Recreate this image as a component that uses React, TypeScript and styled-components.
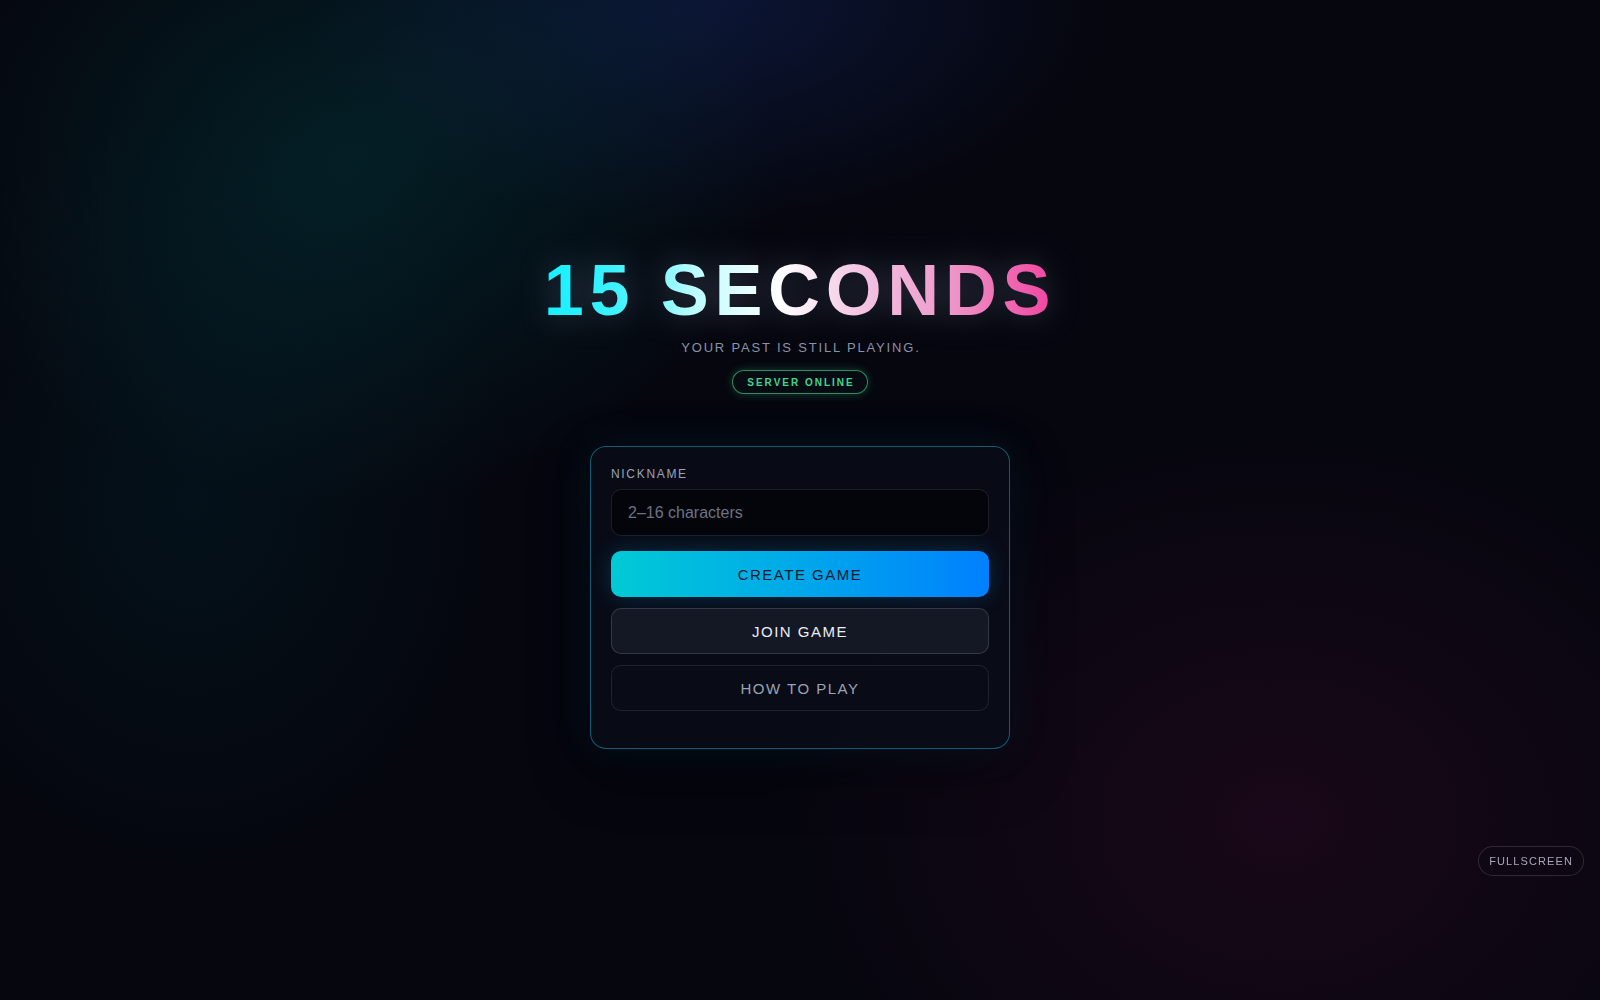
import React, { useState } from "react";
import styled, { createGlobalStyle, css } from "styled-components";

const GlobalStyle = createGlobalStyle`
  * { box-sizing: border-box; }
  html, body { margin: 0; padding: 0; height: 100%; }
  body {
    font-family: "Liberation Sans", Arial, sans-serif;
    background: #05060e;
    color: #e8ecf4;
  }
  #root { min-height: 100vh; }
`;

type Variant = "primary" | "secondary" | "ghost";

export default function App() {
  const [nickname, setNickname] = useState("");

  return (
    <Page>
      <GlobalStyle />
      <Header>
        <Title>15 SECONDS</Title>
        <Tagline>YOUR PAST IS STILL PLAYING.</Tagline>
        <StatusPill>SERVER ONLINE</StatusPill>
      </Header>

      <Card>
        <FieldLabel htmlFor="nickname">NICKNAME</FieldLabel>
        <NicknameInput
          id="nickname"
          placeholder="2–16 characters"
          value={nickname}
          onChange={(event: React.ChangeEvent<HTMLInputElement>) =>
            setNickname(event.target.value)
          }
        />
        <Actions>
          <MenuButton variant="primary">CREATE GAME</MenuButton>
          <MenuButton variant="secondary">JOIN GAME</MenuButton>
          <MenuButton variant="ghost">HOW TO PLAY</MenuButton>
        </Actions>
      </Card>

      <FullscreenButton>FULLSCREEN</FullscreenButton>
    </Page>
  );
}

const Page = styled.main`
  min-height: 100vh;
  display: flex;
  flex-direction: column;
  align-items: center;
  justify-content: center;
  padding-top: 3px;
  background:
    radial-gradient(ellipse 600px 480px at 22% 16%, rgba(0, 88, 92, 0.3), transparent 72%),
    radial-gradient(ellipse 560px 320px at 44% 0%, rgba(22, 46, 116, 0.38), transparent 72%),
    radial-gradient(ellipse 460px 560px at 12% 50%, rgba(0, 62, 72, 0.2), transparent 70%),
    radial-gradient(ellipse 700px 560px at 80% 82%, rgba(72, 12, 50, 0.3), transparent 74%),
    #05060e;
`;

const Header = styled.header`
  display: flex;
  flex-direction: column;
  align-items: center;
`;

const Title = styled.h1`
  margin: 0 0 14px;
  font-size: 72px;
  line-height: 1;
  font-weight: 700;
  letter-spacing: 0.078em;
  background: linear-gradient(
    90deg,
    #14f0ff 0%,
    #3ef2ff 14%,
    #bffcff 30%,
    #ffffff 46%,
    #f2c4e2 62%,
    #ee9ccc 78%,
    #f0439f 100%
  );
  -webkit-background-clip: text;
  background-clip: text;
  -webkit-text-fill-color: transparent;
  color: transparent;
  filter: drop-shadow(0 0 16px rgba(190, 210, 255, 0.26));
`;

const Tagline = styled.p`
  margin: 0 0 15px;
  font-size: 13px;
  line-height: 15px;
  letter-spacing: 0.14em;
  padding-left: 0.14em;
  color: #8a93a8;
`;

const StatusPill = styled.span`
  display: inline-flex;
  align-items: center;
  height: 24px;
  padding: 0 12px 0 14px;
  border-radius: 999px;
  border: 1px solid rgba(64, 214, 146, 0.65);
  background: rgba(6, 24, 20, 0.35);
  box-shadow: 0 0 10px rgba(64, 214, 146, 0.28);
  color: #43d592;
  font-size: 10px;
  font-weight: 700;
  letter-spacing: 0.2em;
`;

const Card = styled.section`
  margin-top: 52px;
  width: 420px;
  padding: 20px 20px 37px;
  border-radius: 16px;
  border: 1px solid rgba(20, 175, 210, 0.5);
  background: rgba(9, 13, 24, 0.88);
  box-shadow: 0 0 46px rgba(0, 170, 230, 0.09), 0 20px 60px rgba(0, 0, 0, 0.45);
  display: flex;
  flex-direction: column;
`;

const FieldLabel = styled.label`
  font-size: 12px;
  line-height: 14px;
  letter-spacing: 0.14em;
  color: #9aa3b6;
  margin-bottom: 8px;
`;

const NicknameInput = styled.input`
  height: 47px;
  width: 100%;
  padding: 0 16px;
  border-radius: 10px;
  border: 1px solid rgba(255, 255, 255, 0.1);
  background: #04050b;
  color: #e8ecf4;
  font-family: "Liberation Sans", Arial, sans-serif;
  font-size: 16px;
  outline: none;

  &::placeholder {
    color: #6c7282;
  }
`;

const Actions = styled.div`
  margin-top: 15px;
  display: flex;
  flex-direction: column;
  gap: 11px;
`;

const variants = {
  primary: css`
    border: none;
    background: linear-gradient(90deg, #00cad6 0%, #00a8ea 50%, #0080ff 100%);
    color: #0a1a2e;
    box-shadow: 0 0 22px rgba(0, 170, 255, 0.22);
  `,
  secondary: css`
    border: 1px solid rgba(255, 255, 255, 0.14);
    background: rgba(22, 26, 38, 0.92);
    color: #e9edf5;
  `,
  ghost: css`
    border: 1px solid rgba(255, 255, 255, 0.09);
    background: rgba(10, 14, 24, 0.6);
    color: #9aa2b5;
  `,
};

const MenuButton = styled.button<{ variant: Variant }>`
  height: 46px;
  width: 100%;
  border-radius: 10px;
  font-family: "Liberation Sans", Arial, sans-serif;
  font-size: 15px;
  letter-spacing: 0.1em;
  cursor: pointer;
  ${({ variant }) => variants[variant]}
`;

const FullscreenButton = styled.button`
  position: fixed;
  right: 16px;
  bottom: 124px;
  height: 30px;
  padding: 0 10px;
  border-radius: 999px;
  border: 1px solid rgba(255, 255, 255, 0.14);
  background: rgba(14, 8, 20, 0.55);
  color: #a9a6ba;
  font-family: "Liberation Sans", Arial, sans-serif;
  font-size: 11px;
  letter-spacing: 0.1em;
  cursor: pointer;
`;
